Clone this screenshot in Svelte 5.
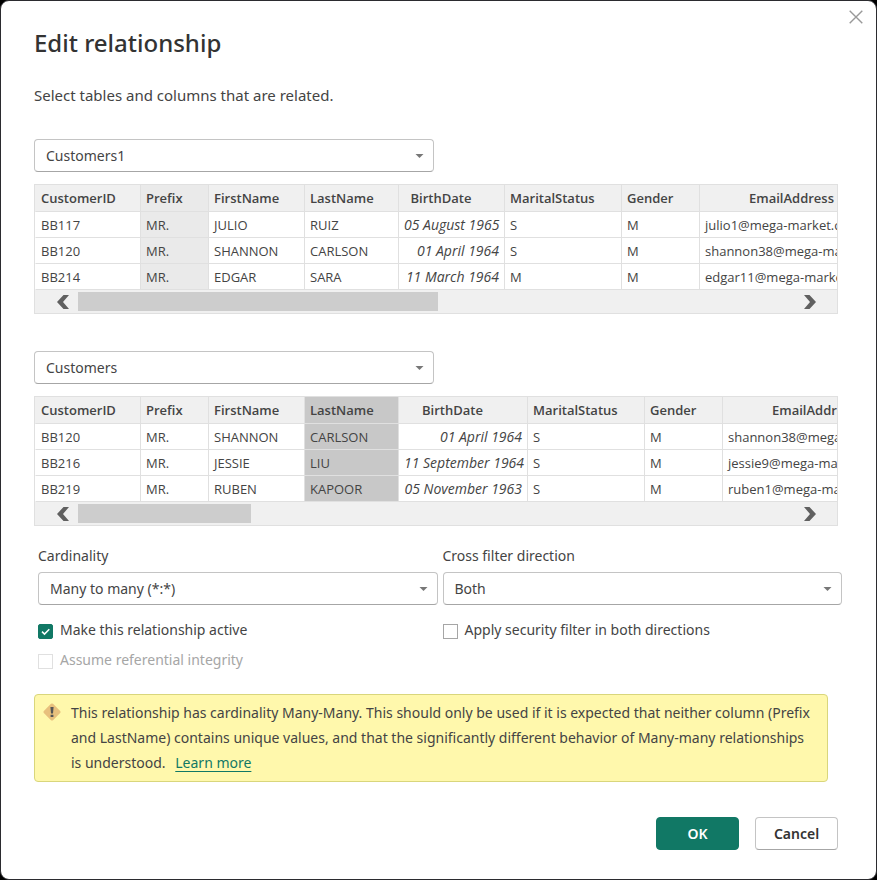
<script>
  const tables = [
    {
      id: 'first-table',
      label: 'First table',
      options: ['Customers1', 'Customers'],
      selected: 'Customers1',
      highlight: 1,
      tone: 'soft',
      widths: [105, 68, 96, 94, 106, 117, 78, 205],
      thumb: 50,
      rows: [
        ['BB117', 'MR.', 'JULIO', 'RUIZ', '05 August 1965', 'S', 'M', 'julio1@mega-market.com'],
        ['BB120', 'MR.', 'SHANNON', 'CARLSON', '01 April 1964', 'S', 'M', 'shannon38@mega-market.com'],
        ['BB214', 'MR.', 'EDGAR', 'SARA', '11 March 1964', 'M', 'M', 'edgar11@mega-market.com']
      ]
    },
    {
      id: 'second-table',
      label: 'Second table',
      options: ['Customers', 'Customers1'],
      selected: 'Customers',
      highlight: 3,
      tone: 'strong',
      widths: [105, 68, 96, 94, 129, 117, 78, 205],
      thumb: 24,
      rows: [
        ['BB120', 'MR.', 'SHANNON', 'CARLSON', '01 April 1964', 'S', 'M', 'shannon38@mega-market.com'],
        ['BB216', 'MR.', 'JESSIE', 'LIU', '11 September 1964', 'S', 'M', 'jessie9@mega-market.com'],
        ['BB219', 'MR.', 'RUBEN', 'KAPOOR', '05 November 1963', 'S', 'M', 'ruben1@mega-market.com']
      ]
    }
  ];
  const columns = ['CustomerID', 'Prefix', 'FirstName', 'LastName', 'BirthDate', 'MaritalStatus', 'Gender', 'EmailAddress'];
  const total = (list) => list.reduce((sum, n) => sum + n, 0);
</script>

{#snippet dropdown(id, label, options, selected)}
  <div class="dropdown">
    <select {id} aria-label={label} value={selected}>
      {#each options as option}
        <option value={option}>{option}</option>
      {/each}
    </select>
    <svg class="caret" viewBox="0 0 8 4" aria-hidden="true"><path d="M0 0h8L4 4z" /></svg>
  </div>
{/snippet}

{#snippet checkbox(id, text, checked, disabled)}
  <label class="check" class:disabled for={id}>
    <span class="box">
      <input {id} type="checkbox" {checked} {disabled} />
      <svg viewBox="0 0 15 15" aria-hidden="true"><path d="M4 7.6l2.5 2.5L11.3 5.2" /></svg>
    </span>
    <span>{text}</span>
  </label>
{/snippet}

<div class="page">
  <main class="dialog" role="dialog" aria-labelledby="title">
    <button class="close" aria-label="Close">
      <svg viewBox="0 0 14 14" aria-hidden="true"><path d="M.7.7l12.6 12.6M13.3.7L.7 13.3" /></svg>
    </button>
    <h1 id="title">Edit relationship</h1>
    <p class="intro">Select tables and columns that are related.</p>

    {#each tables as table}
      <section>
        <div class="table-picker">
          {@render dropdown(table.id, table.label, table.options, table.selected)}
        </div>
        <div class="preview">
          <div class="viewport">
            <table style="width: {total(table.widths)}px">
              <colgroup>
                {#each table.widths as width}
                  <col style="width: {width}px" />
                {/each}
              </colgroup>
              <thead>
                <tr>
                  {#each columns as column, c}
                    <th scope="col" class={[c === table.highlight && table.tone, (c === 4 || c === 7) && 'centered']}>{column}</th>
                  {/each}
                </tr>
              </thead>
              <tbody>
                {#each table.rows as row}
                  <tr>
                    {#each row as cell, c}
                      <td class={[c === table.highlight && table.tone, c === 4 && 'date']}>{cell}</td>
                    {/each}
                  </tr>
                {/each}
              </tbody>
            </table>
          </div>
          <div class="scrollbar">
            <button aria-label="Scroll left">
              <svg viewBox="0 0 12 14" aria-hidden="true"><path d="M6.5 0H12L6 7l6 7H6.5L0 7z" /></svg>
            </button>
            <div class="track"><div class="thumb" style="width: {table.thumb}%"></div></div>
            <button aria-label="Scroll right">
              <svg viewBox="0 0 12 14" aria-hidden="true"><path d="M5.5 0H0l6 7-6 7h5.5L12 7z" /></svg>
            </button>
          </div>
        </div>
      </section>
    {/each}

    <div class="settings">
      <div class="setting">
        <label class="caption" for="cardinality">Cardinality</label>
        {@render dropdown('cardinality', 'Cardinality', ['Many to many (*:*)', 'Many to one (*:1)', 'One to one (1:1)'], 'Many to many (*:*)')}
        {@render checkbox('active', 'Make this relationship active', true, false)}
        {@render checkbox('integrity', 'Assume referential integrity', false, true)}
      </div>
      <div class="setting">
        <label class="caption" for="direction">Cross filter direction</label>
        {@render dropdown('direction', 'Cross filter direction', ['Both', 'Single'], 'Both')}
        {@render checkbox('security', 'Apply security filter in both directions', false, false)}
      </div>
    </div>

    <div class="warning" role="alert">
      <svg viewBox="0 0 18 18" aria-hidden="true">
        <path class="sign" d="M8 .8q1-.8 2 0L17.2 8q.8 1 0 2L10 17.2q-1 .8-2 0L.8 10q-.8-1 0-2z" />
        <path class="mark" d="M7.4 4h3.2l-.6 6.5H8zM7.6 11.7h2.8v2.4H7.6z" />
      </svg>
      <p>
        This relationship has cardinality Many-Many. This should only be used if it is expected that neither column (Prefix and LastName) contains unique values, and that the significantly different behavior of Many-many relationships is&nbsp;understood.
        <a href="#learn">Learn more</a>
      </p>
    </div>

    <footer>
      <button class="action primary">OK</button>
      <button class="action">Cancel</button>
    </footer>
  </main>
</div>

<style>
  .page {
    min-height: 100vh;
    display: flex;
    background: #000;
    color: #444;
    font: 14px/20px "Noto Sans", "Open Sans", sans-serif;
  }
  .page, .page * { box-sizing: border-box; }
  button, select { font: inherit; color: inherit; }
  .dialog {
    position: relative;
    flex: 1;
    min-width: 0;
    display: flex;
    flex-direction: column;
    padding: 26px 38px 29px 33px;
    background: #fff;
    border: 1px solid #2b2b2f;
    border-radius: 9px;
  }
  .close {
    position: absolute;
    top: 8px;
    right: 12px;
    width: 16px;
    height: 16px;
    padding: 1px;
    border: 0;
    background: none;
  }
  .close svg { display: block; width: 14px; height: 14px; fill: none; stroke: #999; stroke-width: 1.4; }
  h1 { margin: 0; font-size: 24px; line-height: 32px; font-weight: 500; color: #333; }
  .intro { margin: 26px 0 34px; font-size: 15px; }
  section { margin-bottom: 37px; }
  section + section { margin-bottom: 20px; }
  .table-picker { max-width: 400px; }
  .dropdown { position: relative; }
  select {
    appearance: none;
    display: block;
    width: 100%;
    height: 33px;
    padding: 0 28px 0 11px;
    border: 1px solid #c4c4c4;
    border-bottom-color: #a6a6a6;
    border-radius: 4px;
    background: #fff;
  }
  .caret { position: absolute; right: 10px; top: 15px; width: 9px; height: 4px; fill: #777; pointer-events: none; }

  .preview { margin-top: 12px; border: 1px solid #e0e0e0; }
  .viewport { overflow: hidden; }
  table { table-layout: fixed; border-collapse: separate; border-spacing: 0; font-family: "Open Sans", "Noto Sans", sans-serif; font-size: 13px; line-height: 18px; }
  th, td {
    height: 26px;
    padding: 0 5px;
    border: solid #e0e0e0;
    border-width: 0 0 1px 1px;
    text-align: left;
    white-space: nowrap;
    overflow: hidden;
  }
  th:first-child, td:first-child { border-left-color: transparent; }
  th { height: 27px; background: #f0f0f0; font-weight: 600; }
  th.centered { padding-right: 26px; text-align: center; }
  td.date { text-align: right; font-size: 14px; font-style: italic; }
  .soft { background: #eaeaea; }
  .strong { background: #c8c8c8; }
  .scrollbar { display: flex; align-items: center; height: 23px; background: #f0f0f0; }
  .scrollbar button { display: flex; justify-content: flex-end; width: 43px; height: 19px; padding: 3px 9px 0 0; border: 0; background: none; }
  .scrollbar button:last-child { justify-content: flex-start; width: 40px; padding: 3px 0 0 7px; }
  .scrollbar svg { flex: none; width: 12px; height: 14px; fill: #606060; }
  .track { flex: 1; height: 19px; }
  .thumb { height: 19px; background: #cdcdcd; }

  .settings { display: grid; grid-template-columns: 1fr 1fr; gap: 5px; margin: 0 -4px 0 4px; }
  .caption { display: block; margin-bottom: 6px; }
  .check { display: flex; align-items: center; gap: 7px; margin-top: 15px; }
  .check + .check { margin-top: 10px; }
  .check.disabled { color: #a6a6a6; }
  .box { display: grid; margin-top: 2px; }
  .box input, .box svg { grid-area: 1 / 1; width: 15px; height: 15px; margin: 0; }
  .box input { appearance: none; border: 1px solid #a6a6a6; background: #fff; }
  .box input:disabled { border-color: #e0e0e0; }
  .box input:checked { border-color: #117865; background: #117865; border-radius: 2px; }
  .box svg { fill: none; stroke: none; stroke-width: 1.5; pointer-events: none; }
  .box input:checked + svg { stroke: #fff; }

  .warning {
    display: flex;
    gap: 10px;
    margin: 24px 10px 35px 0;
    padding: 5px 3px 6px 8px;
    border: 1px solid #d9d67c;
    border-radius: 4px;
    background: #fff8ac;
  }
  .warning svg { flex: none; width: 18px; height: 18px; margin-top: 3px; }
  .sign { fill: #e8c07d; }
  .mark { fill: #555; }
  .warning p { margin: 0; line-height: 25px; }
  .warning a { margin-left: 6px; color: #117865; text-underline-offset: 3px; }

  footer { display: flex; justify-content: flex-end; gap: 16px; margin-top: auto; }
  .action {
    width: 83px;
    height: 33px;
    padding: 0;
    border: 1px solid #c4c4c4;
    border-bottom-color: #a6a6a6;
    border-radius: 4px;
    background: #fff;
    color: #333;
    font-weight: 600;
  }
  .action.primary { border-color: #117865; background: #117865; color: #fff; }
</style>
